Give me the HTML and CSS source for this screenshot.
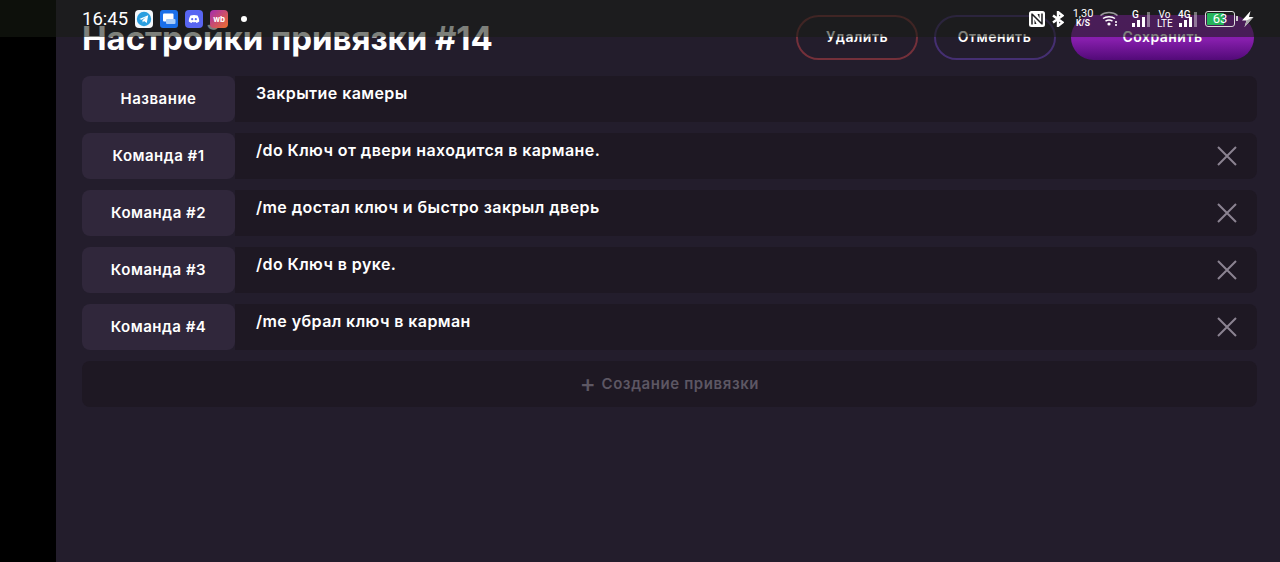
FILE: index.html
```html
<!DOCTYPE html>
<html lang="ru">
<head>
<meta charset="UTF-8" />
<meta name="viewport" content="width=device-width, initial-scale=1" />
<title>Настройки привязки #14</title>
<link rel="stylesheet" href="styles.css">
</head>
<body>

<div class="statusbar">
  <div class="status-left">
    <span class="clock">16:45</span>
    <svg class="app" viewBox="0 0 18 18"><rect width="18" height="18" rx="4" fill="#f4f8fb"/><circle cx="9" cy="9" r="7.200" fill="#2a9fe0"/><path d="M4.300 9 13.200 5.300 11.800 13 9 11.100 7.700 12.500 7.400 10.200 11 7 6.600 9.800Z" fill="#fff"/></svg>
    <svg class="app" viewBox="0 0 18 18"><rect width="18" height="18" rx="3" fill="#1a6fe8"/><rect x="3" y="3.500" width="10.500" height="8" rx="1" fill="#fff"/><rect x="6" y="9" width="9.500" height="5" rx="1" fill="#a9cdf7"/></svg>
    <svg class="app" viewBox="0 0 18 18"><rect width="18" height="18" rx="4" fill="#5865f2"/><path d="M5.500 5.500C7.500 4.700 10.500 4.700 12.500 5.500 13.700 7.400 14.300 9.400 14.200 11.600 13.200 12.400 12.300 12.800 11.400 13L10.800 12C9.500 12.300 8.500 12.300 7.200 12L6.600 13C5.700 12.800 4.800 12.400 3.800 11.600 3.700 9.400 4.300 7.400 5.500 5.500Z" fill="#fff"/><circle cx="7.200" cy="9.200" r="1.100" fill="#5865f2"/><circle cx="10.800" cy="9.200" r="1.100" fill="#5865f2"/></svg>
    <span class="app app-wb">wb</span>
    <span class="dot"></span>
  </div>
  <div class="status-right">
    <svg class="ic-nfc" viewBox="0 0 16 16"><rect width="16" height="16" rx="2.500" fill="#fff"/><path d="M3 2.500V13.500M3 3 13 13M13 2.500V13.500" fill="none" stroke="#1c1c1f" stroke-width="1.500"/><path d="M5.500 8.500V13H7.500ZM10.500 7.500V3H8.500Z" fill="#1c1c1f"/></svg>
    <svg class="ic-bt" viewBox="0 0 12 16"><path d="M1 4.500 10.500 11.500 6 15V1L10.500 4.500 1 11.500" fill="none" stroke="#fff" stroke-width="2.400"/></svg>
    <span class="speed">1,30<small>K/S</small></span>
    <svg class="ic-wifi" viewBox="0 0 18 15"><g fill="none" stroke="#fff" stroke-width="1.500"><path d="M.5 4.500C5 .5 13 .5 17.500 4.500" opacity=".55"/><path d="M3 7.500C6 5 12 5 15 7.500"/><path d="M5.500 10.200C7.500 8.800 10.500 8.800 12.500 10.200"/></g><circle cx="9" cy="13" r="1.600" fill="#fff"/><path d="M16 10v2M16 13v2" stroke="#fff" stroke-width="1.600"/></svg>
    <span class="signal signal-g"><b>G</b><i class="bars"><u class="b1"></u><u class="b2"></u><u class="b3"></u><u class="b4"></u></i></span>
    <span class="volte">Vo<br>LTE</span>
    <span class="signal signal-4g"><b>4G</b><i class="bars"><u class="b1"></u><u class="b2"></u><u class="b3"></u><u class="b4"></u></i></span>
    <span class="battery"><span class="battery-fill"></span><span class="battery-num">63</span></span>
    <span class="battery-cap"></span>
    <svg class="ic-bolt" viewBox="0 0 13 16"><path d="M9.500 0 1 9.500H5.500L3.500 16 12.500 6H8Z" fill="#fff"/><path d="M12.500 6 3.500 16 5.500 9.500Z" fill="#aaa"/></svg>
  </div>
</div>

<div class="page">
  <div class="gutter"></div>
  <main class="panel">
    <header class="top">
      <h1>Настройки привязки #14</h1>
      <div class="actions">
        <button class="btn btn-delete">Удалить</button>
        <button class="btn btn-cancel">Отменить</button>
        <button class="btn btn-save">Сохранить</button>
      </div>
    </header>

    <section class="rows">
      <div class="row">
        <div class="label">Название</div>
        <div class="value">Закрытие камеры</div>
      </div>
      <div class="row">
        <div class="label">Команда #1</div>
        <div class="value">/do Ключ от двери находится в кармане.<svg class="close" viewBox="0 0 20 20"><path d="M1 1 19 19M19 1 1 19"/></svg></div>
      </div>
      <div class="row">
        <div class="label">Команда #2</div>
        <div class="value">/me достал ключ и быстро закрыл дверь<svg class="close" viewBox="0 0 20 20"><path d="M1 1 19 19M19 1 1 19"/></svg></div>
      </div>
      <div class="row">
        <div class="label">Команда #3</div>
        <div class="value">/do Ключ в руке.<svg class="close" viewBox="0 0 20 20"><path d="M1 1 19 19M19 1 1 19"/></svg></div>
      </div>
      <div class="row">
        <div class="label">Команда #4</div>
        <div class="value">/me убрал ключ в карман<svg class="close" viewBox="0 0 20 20"><path d="M1 1 19 19M19 1 1 19"/></svg></div>
      </div>
      <div class="add-row"><span class="plus">+</span> Создание привязки</div>
    </section>
  </main>
</div>

</body>
</html>
```

FILE: styles.css
```css
* {
  box-sizing: border-box;
  margin: 0;
  padding: 0;
}

html, body {
  height: 562px;
  overflow: hidden;
}

body {
  background: #000;
  color: #fff;
  font-family: "Inter", "Noto Sans", sans-serif;
}

.page {
  display: flex;
  height: 562px;
}

.gutter {
  width: 56px;
  background: #000;
}

.panel {
  flex: 1;
  background: #231d2c;
  padding: 15px 23px 0 26px;
}

.top {
  display: flex;
  align-items: flex-start;
  justify-content: space-between;
  height: 61px;
}

h1 {
  font-size: 33px;
  font-weight: 700;
  line-height: 46px;
  letter-spacing: -0.05px;
}

.actions {
  display: flex;
  gap: 15.500px;
  margin-right: 3px;
}

.btn {
  width: 122px;
  height: 45px;
  padding-bottom: 3px;
  border-radius: 23px;
  background: transparent;
  color: #fff;
  font-family: inherit;
  font-size: 14px;
  font-weight: 600;
  letter-spacing: 0.5px;
  border: 2px solid;
}

.btn-delete { border-color: #74303a; }
.btn-cancel { border-color: #452f72; }

.btn-save {
  width: 183px;
  border: none;
  background: linear-gradient(#8a1fb0 0%, #861eac 55%, #520a78 100%);
}

.rows {
  display: flex;
  flex-direction: column;
  gap: 11px;
}

.row {
  display: flex;
  height: 46px;
}

.label {
  width: 153px;
  display: flex;
  align-items: center;
  justify-content: center;
  padding-bottom: 2px;
  background: #30273b;
  border-radius: 8px;
  font-size: 15px;
  font-weight: 600;
  letter-spacing: 0.5px;
}

.value {
  flex: 1;
  display: flex;
  justify-content: space-between;
  background: #1e1823;
  border-radius: 0 8px 8px 0;
  padding: 8px 20px 0 21px;
  font-size: 16px;
  font-weight: 600;
  letter-spacing: 0.42px;
  line-height: 18px;
}

.close {
  width: 20px;
  height: 20px;
  margin-top: 5px;
}

.close path {
  fill: none;
  stroke: #8b8391;
  stroke-width: 2;
}

.add-row {
  height: 46px;
  padding-bottom: 1px;
  display: flex;
  align-items: center;
  justify-content: center;
  gap: 5px;
  background: #1e1823;
  border-radius: 8px;
  color: #5d5763;
  font-size: 15px;
  font-weight: 600;
  letter-spacing: 0.6px;
}

.plus {
  font-size: 24px;
  font-weight: 500;
  line-height: 20px;
}

/* status bar lies over the app */
.statusbar {
  position: absolute;
  top: 0;
  left: 0;
  width: 1280px;
  height: 37px;
  display: flex;
  align-items: center;
  justify-content: space-between;
  padding: 0 26px 0 82px;
  background: rgba(23, 28, 20, 0.56);
}

.status-left, .status-right {
  display: flex;
  align-items: center;
}

.status-left { gap: 7px; }

.clock {
  font-family: "Roboto", sans-serif;
  font-size: 18.500px;
}

.app {
  width: 18px;
  height: 18px;
}

.app-wb {
  display: flex;
  align-items: center;
  justify-content: center;
  border-radius: 4px;
  background: linear-gradient(135deg, #a42bb0, #f0702a);
  font-size: 8px;
  font-weight: 700;
}

.dot {
  width: 6px;
  height: 6px;
  margin-left: 6px;
  border-radius: 50%;
  background: #fff;
}

.ic-nfc { width: 16px; height: 16px; }
.ic-bt { width: 12px; height: 16px; margin-left: 7px; }
.ic-wifi { width: 18px; height: 15px; margin-left: 7px; }
.ic-bolt { width: 13px; height: 16px; margin-left: 3px; }

.speed {
  width: 20px;
  margin-left: 9px;
  display: flex;
  flex-direction: column;
  align-items: center;
  font-family: "Roboto", sans-serif;
  font-size: 11px;
  line-height: 10px;
}

.speed small {
  font-size: 8.500px;
  font-weight: 700;
  line-height: 9px;
}

.signal {
  position: relative;
  height: 17px;
}

.signal-g { width: 18px; margin-left: 14px; }
.signal-4g { width: 19px; margin-left: 6px; }

.signal b {
  position: absolute;
  left: 0;
  top: 0;
  font-family: "Roboto", sans-serif;
  font-size: 10px;
  font-weight: 500;
  line-height: 10px;
}

.bars {
  position: absolute;
  right: 0;
  bottom: 0;
  display: flex;
  align-items: flex-end;
  gap: 2px;
}

.bars u {
  display: block;
  width: 3px;
  background: #fff;
}

.bars .b1 { height: 4px; }
.bars .b2 { height: 7px; }
.bars .b3 { height: 10px; }
.bars .b4 { height: 15px; opacity: 0.4; }

.volte {
  width: 15px;
  margin-left: 7px;
  font-family: "Roboto", sans-serif;
  font-size: 10px;
  line-height: 9px;
  text-align: center;
}

.battery {
  position: relative;
  width: 30px;
  height: 16px;
  margin-left: 8px;
  border: 1px solid #ddd;
  border-radius: 3px;
  padding: 1px;
}

.battery-fill {
  display: block;
  width: 66%;
  height: 100%;
  border-radius: 1px;
  background: #25b45a;
}

.battery-num {
  position: absolute;
  inset: 0;
  display: flex;
  align-items: center;
  justify-content: center;
  font-family: "Roboto", sans-serif;
  font-size: 13px;
}

.battery-cap {
  width: 2px;
  height: 5px;
  margin-left: 1px;
  background: #ccc;
}
```
